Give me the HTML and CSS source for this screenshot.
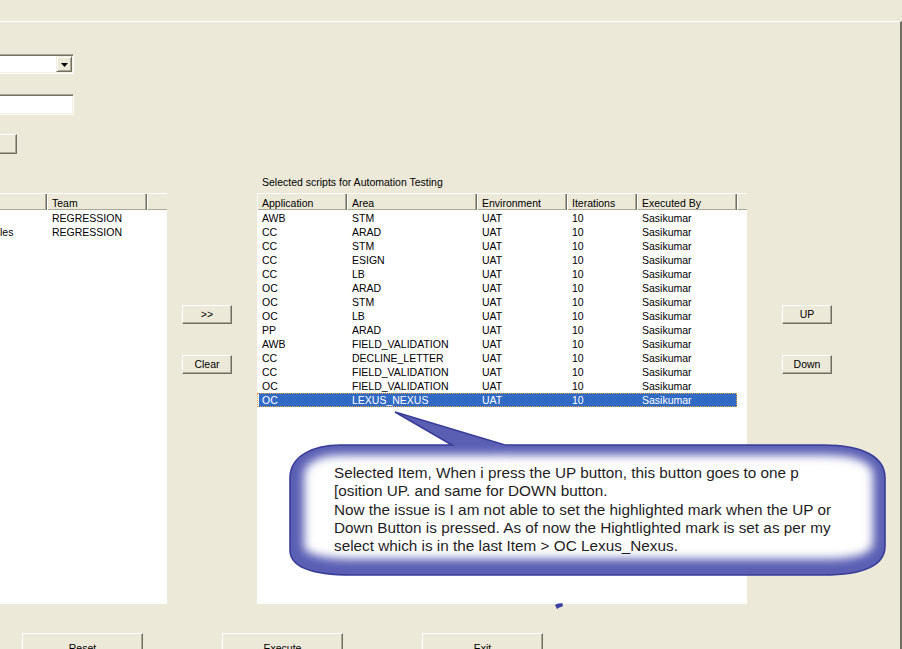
FILE: index.html
```html
<!DOCTYPE html>
<html>
<head>
<meta charset="utf-8">
<link rel="stylesheet" href="styles.css">
</head>
<body>
<div class="window">
  <div class="topbar"></div>
  <div class="main">
    <div class="controls">
      <div class="combo"><span class="combo-btn"><svg width="7" height="4" viewBox="0 0 7 4"><polygon points="0,0 7,0 3.5,4" fill="#000"/></svg></span></div>
      <div class="field"></div>
      <div class="btn tiny"></div>
    </div>
    <div class="caption">Selected scripts for Automation Testing</div>
    <div class="lists">
      <div class="list list-left">
        <div class="lv-head">
          <div class="hc lw1"></div>
          <div class="hc lw2">Team</div>
          <div class="hc fill"></div>
        </div>
        <div class="lrow"><div class="lc1"></div><div class="lc2">REGRESSION</div></div>
        <div class="lrow"><div class="lc1">les</div><div class="lc2">REGRESSION</div></div>
      </div>
      <div class="side side-mid">
        <div class="btn sbtn">&gt;&gt;</div>
        <div class="btn sbtn">Clear</div>
      </div>
      <div class="list list-right">
        <div class="lv-head">
          <div class="hc w1">Application</div>
          <div class="hc w2">Area</div>
          <div class="hc w3">Environment</div>
          <div class="hc w4">Iterations</div>
          <div class="hc w5">Executed By</div>
          <div class="hc fill"></div>
        </div>
        <div class="row"><div class="c1">AWB</div><div class="c2">STM</div><div class="c3">UAT</div><div class="c4">10</div><div class="c5">Sasikumar</div></div>
        <div class="row"><div class="c1">CC</div><div class="c2">ARAD</div><div class="c3">UAT</div><div class="c4">10</div><div class="c5">Sasikumar</div></div>
        <div class="row"><div class="c1">CC</div><div class="c2">STM</div><div class="c3">UAT</div><div class="c4">10</div><div class="c5">Sasikumar</div></div>
        <div class="row"><div class="c1">CC</div><div class="c2">ESIGN</div><div class="c3">UAT</div><div class="c4">10</div><div class="c5">Sasikumar</div></div>
        <div class="row"><div class="c1">CC</div><div class="c2">LB</div><div class="c3">UAT</div><div class="c4">10</div><div class="c5">Sasikumar</div></div>
        <div class="row"><div class="c1">OC</div><div class="c2">ARAD</div><div class="c3">UAT</div><div class="c4">10</div><div class="c5">Sasikumar</div></div>
        <div class="row"><div class="c1">OC</div><div class="c2">STM</div><div class="c3">UAT</div><div class="c4">10</div><div class="c5">Sasikumar</div></div>
        <div class="row"><div class="c1">OC</div><div class="c2">LB</div><div class="c3">UAT</div><div class="c4">10</div><div class="c5">Sasikumar</div></div>
        <div class="row"><div class="c1">PP</div><div class="c2">ARAD</div><div class="c3">UAT</div><div class="c4">10</div><div class="c5">Sasikumar</div></div>
        <div class="row"><div class="c1">AWB</div><div class="c2">FIELD_VALIDATION</div><div class="c3">UAT</div><div class="c4">10</div><div class="c5">Sasikumar</div></div>
        <div class="row"><div class="c1">CC</div><div class="c2">DECLINE_LETTER</div><div class="c3">UAT</div><div class="c4">10</div><div class="c5">Sasikumar</div></div>
        <div class="row"><div class="c1">CC</div><div class="c2">FIELD_VALIDATION</div><div class="c3">UAT</div><div class="c4">10</div><div class="c5">Sasikumar</div></div>
        <div class="row"><div class="c1">OC</div><div class="c2">FIELD_VALIDATION</div><div class="c3">UAT</div><div class="c4">10</div><div class="c5">Sasikumar</div></div>
        <div class="row selected"><div class="c1">OC</div><div class="c2">LEXUS_NEXUS</div><div class="c3">UAT</div><div class="c4">10</div><div class="c5">Sasikumar</div></div>
      </div>
      <div class="side side-right">
        <div class="btn sbtn">UP</div>
        <div class="btn sbtn">Down</div>
      </div>
    </div>
    <div class="actions">
      <div class="btn abtn">Reset</div>
      <div class="btn abtn">Execute</div>
      <div class="btn abtn">Exit</div>
    </div>
  </div>

  <svg class="callout" width="902" height="649" viewBox="0 0 902 649">
    <defs>
      <path id="bub" d="M340 445 L452 445 L395 412 L505 445 L823 445 C865 445 885 458 885 478 L885 546 C885 565 865 575 823 575 L352 575 C315 575 290 568 290 550 L290 478 C290 455 315 445 340 445 Z"/>
      <clipPath id="bubclip"><use href="#bub"/></clipPath>
      <filter id="soft" x="-20%" y="-40%" width="140%" height="180%"><feGaussianBlur stdDeviation="5"/></filter>
    </defs>
    <use href="#bub" fill="#ffffff"/>
    <g clip-path="url(#bubclip)">
      <g transform="translate(1,-3)"><use href="#bub" fill="none" stroke="#5a5eb4" stroke-width="26" filter="url(#soft)"/></g>
    </g>
    <use href="#bub" fill="none" stroke="#3a3d98" stroke-width="1.6"/>
    <path d="M555 605 Q558 602.5 563 603.5 L562.5 606.5 Q559 607 557 609 Z" fill="#3b3fa2"/>
  </svg>
  <div class="callout-text">Selected Item, When i press the UP button, this button goes to one p<br>[osition UP. and same for DOWN button.<br>Now the issue is I am not able to set the highlighted mark when the UP or<br>Down Button is pressed. As of now the Hightlighted mark is set as per my<br>select which is in the last Item &gt; OC Lexus_Nexus.</div>
</div>
</body>
</html>
```

FILE: styles.css
```css
* { box-sizing: border-box; }
html, body { margin: 0; padding: 0; background: #ECE9D8; }
body { font-family: "Liberation Sans", Arial, sans-serif; font-size: 10.5px; color: #000; }

.window {
  position: relative;
  width: 902px;
  height: 649px;
  overflow: hidden;
  background: #ECE9D8;
}
.topbar { height: 21px; }
.main {
  height: 628px;
  border-top: 1px solid #ffffff;
  border-right: 2px solid #716F64;
}

.controls { padding-top: 32px; display: flex; flex-direction: column; align-items: flex-start; }

.combo {
  margin-left: -10px;
  width: 84px;
  height: 20px;
  padding: 1px;
  background: #fff;
  border: 1px solid;
  border-color: #ACA899 #ffffff #ffffff #ACA899;
  box-shadow: inset 1px 1px #716F64, inset -1px -1px #F1EFE2;
  display: flex;
  justify-content: flex-end;
}
.combo-btn {
  width: 16px;
  height: 16px;
  background: #ECE9D8;
  border: 1px solid;
  border-color: #F1EFE2 #716F64 #716F64 #F1EFE2;
  box-shadow: inset 1px 1px #fff, inset -1px -1px #ACA899;
  display: flex;
  align-items: center;
  justify-content: center;
}
.combo-btn svg { display: block; margin-top: 1px; }

.field {
  margin-top: 20px;
  margin-left: -10px;
  width: 84px;
  height: 21px;
  background: #fff;
  border: 1px solid;
  border-color: #ACA899 #ffffff #ffffff #ACA899;
  box-shadow: inset 1px 1px #716F64, inset -1px -1px #F1EFE2;
}

.btn {
  background: #ECE9D8;
  border: 1px solid;
  border-color: #ffffff #716F64 #716F64 #ffffff;
  box-shadow: inset -1px -1px #ACA899;
  display: flex;
  align-items: center;
  justify-content: center;
  color: #000;
  font-size: 10.5px;
  line-height: 13px;
}
.tiny { margin-top: 19px; margin-left: -10px; width: 27px; height: 20px; }

.caption {
  margin-top: 22px;
  padding-left: 262px;
  line-height: 13px;
  height: 13px;
}

.lists {
  margin-top: 4px;
  display: flex;
  height: 411px;
}
.list { background: #fff; height: 411px; overflow: hidden; }
.list-left { width: 167px; }
.list-right { width: 490px; }

.lv-head {
  display: flex;
  border-top: 1px solid #ffffff;
  background: #ECE9D8;
  margin-bottom: 1px;
}
.hc {
  height: 16px;
  padding: 2px 0 0 4px;
  line-height: 14px;
  border-left: 1px solid #ffffff;
  border-right: 1px solid #716F64;
  box-shadow: inset -1px -1px #ACA899;
  white-space: nowrap;
  overflow: hidden;
}
.hc.fill { flex: 1; border-right: none; box-shadow: inset 0 -1px #ACA899; }
.lw1 { width: 47px; border-left: none; }
.lw2 { width: 100px; }
.w1 { width: 90px; }
.w2 { width: 130px; }
.w3 { width: 90px; }
.w4 { width: 70px; }
.w5 { width: 100px; }

.lrow { display: flex; height: 14px; line-height: 14px; white-space: nowrap; }
.lc1 { width: 47px; overflow: hidden; }
.lc2 { width: 100px; padding-left: 5px; }

.row {
  display: flex;
  width: 480px;
  height: 14px;
  line-height: 14px;
  white-space: nowrap;
  border-left: 2px solid transparent;
  background-clip: padding-box;
}
.row > div { padding-left: 5px; overflow: hidden; }
.row > .c1 { width: 88px; padding-left: 3px; }
.c2 { width: 130px; }
.c3 { width: 90px; }
.c4 { width: 70px; }
.c5 { width: 100px; }
.row.selected {
  background-color: #316AC5;
  color: #fff;
  outline: 1px dotted #E8A33C;
  outline-offset: -1px;
}

.side {
  display: flex;
  flex-direction: column;
  gap: 31px;
  padding-top: 112px;
}
.side-mid { width: 90px; padding-left: 15px; }
.side-right { padding-left: 35px; }
.sbtn { width: 50px; height: 19px; }

.actions {
  margin-top: 29px;
  padding-left: 22px;
  display: flex;
  gap: 79px;
}
.abtn { width: 121px; height: 30px; }

.callout {
  position: absolute;
  left: 0;
  top: 0;
  pointer-events: none;
}
.callout-text {
  position: absolute;
  left: 334px;
  top: 464px;
  font-family: "Liberation Sans", Arial, sans-serif;
  font-size: 15.3px;
  line-height: 18.3px;
  color: #1e1e1e;
  white-space: nowrap;
}
```
